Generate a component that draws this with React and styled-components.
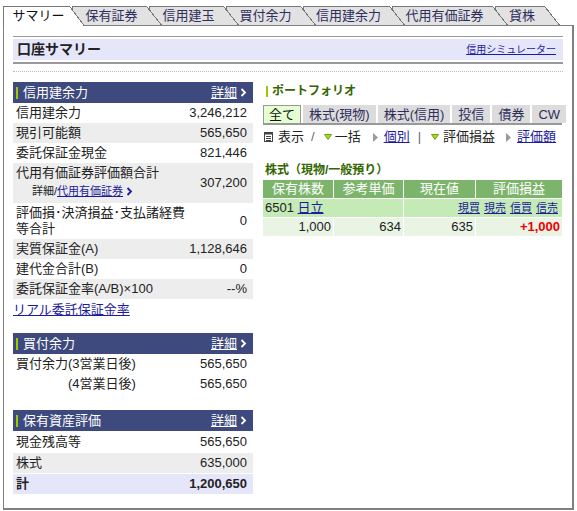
import React from 'react';
import styled, { createGlobalStyle } from 'styled-components';

const GlobalStyle = createGlobalStyle`
  body {
    margin: 0;
    background: #fff;
    font-family: "Liberation Sans", "Noto Sans CJK JP", sans-serif;
    font-size: 13px;
    color: #222;
  }
  a { color: #1c1c9c; text-decoration: underline; }
`;

const Page = styled.div`
  width: 571px;
  margin: 6px 0 0 3px;
`;

const TabBar = styled.div`
  display: flex;
  align-items: flex-start;
  height: 20px;
  margin-bottom: -1px;
  position: relative;
  z-index: 2;
`;

const Tab = styled.div`
  position: relative;
  z-index: ${p => p.$z};
  box-sizing: border-box;
  flex: none;
  width: ${p => p.$w}px;
  height: ${p => (p.$active ? 20 : 19)}px;
  margin-right: 2px;
  padding-left: 3px;
  border-top: 1px solid #777;
  border-left: 1px solid #777;
  background: ${p => (p.$active ? '#fff' : '#e2e2e2')};
  color: ${p => (p.$active ? '#111' : '#2e2e5c')};
  font-size: 13px;
  line-height: 18px;
  text-align: center;
  white-space: nowrap;
  &::after {
    content: '';
    position: absolute;
    top: -1px;
    left: 100%;
    width: 15px;
    height: calc(100% + 1px);
    background: linear-gradient(
      to top right,
      ${p => (p.$active ? '#fff' : '#e2e2e2')} calc(50% - 1px),
      #777 calc(50% - 1px) 50%,
      transparent 50%
    );
  }
`;

const Frame = styled.div`
  position: relative;
  z-index: 1;
  border: 1px solid #808080;
  border-right-width: 2px;
  border-bottom-width: 2px;
  padding: 10px 9px 14px;
`;

const TitleBlock = styled.div`
  border-top: 1px solid #999;
  border-bottom: 2px solid #999;
  padding: 2px 0;
`;

const TitleBar = styled.div`
  display: flex;
  justify-content: space-between;
  align-items: center;
  height: 21px;
  background: #e6e6fa;
  padding: 0 7px 0 4px;
`;

const PageTitle = styled.h1`
  margin: 0;
  font-size: 14px;
  font-weight: bold;
  color: #222;
  line-height: 21px;
`;

const SmallLink = styled.a`
  font-size: 10px;
  line-height: 12px;
`;

const Divider = styled.div`
  margin-top: 7px;
  border-top: 1px dotted #bbb;
`;

const Columns = styled.div`
  display: grid;
  grid-template-columns: 240px 299px;
  column-gap: 10px;
  margin-top: 10px;
  align-items: start;
`;

const Column = styled.div`
  display: flex;
  flex-direction: column;
`;

const SectionHeader = styled.div`
  display: flex;
  align-items: center;
  justify-content: space-between;
  height: 21px;
  margin-top: ${p => p.$mt || 0}px;
  padding: 0 6px 0 3px;
  background: #3e4a7e;
  color: #fff;
  line-height: 16px;
`;

const HeaderTitle = styled.div`
  display: flex;
  align-items: center;
`;

const GreenMark = styled.span`
  display: inline-block;
  width: 2px;
  height: ${p => p.$h || 12}px;
  background: #99cc00;
  margin-right: ${p => p.$mr || 5}px;
  margin-left: ${p => p.$ml || 0}px;
`;

const DetailLink = styled.a`
  display: flex;
  align-items: center;
  gap: 3px;
  color: #fff;
  & > span { text-decoration: underline; }
  text-decoration: none;
`;

const Rows = styled.div`
  display: grid;
  row-gap: ${p => p.$gap || 0}px;
  margin-top: ${p => p.$gap || 0}px;
`;

const shades = { gray: '#ededed', lavender: '#e6e6fa' };

const Row = styled.div`
  display: flex;
  justify-content: space-between;
  align-items: center;
  padding: 2px 6px 2px 3px;
  line-height: 16px;
  background: ${p => shades[p.$shade] || '#fff'};
  font-weight: ${p => (p.$bold ? 'bold' : 'normal')};
`;

const Label = styled.div`
  padding-left: ${p => p.$indent || 0}px;
`;

const Value = styled.div`
  white-space: nowrap;
`;

const SubLine = styled.div`
  font-size: 11px;
  line-height: 20px;
  padding-left: 16px;
  display: flex;
  align-items: center;
  & a { margin-right: 3px; }
`;

const BlockLink = styled.a`
  display: block;
  margin-top: 3px;
  line-height: 16px;
  align-self: flex-start;
`;

const GreenHeading = styled.div`
  display: flex;
  align-items: center;
  margin-top: ${p => p.$mt || 0}px;
  line-height: 16px;
  font-size: 12px;
  font-weight: bold;
  color: #336600;
`;

const FilterTabs = styled.div`
  display: flex;
  gap: 2px;
  margin-top: 6px;
  border-bottom: 2px solid #999;
`;

const FilterTab = styled.div`
  flex: 1 1 auto;
  box-sizing: border-box;
  height: 18px;
  padding: 0 5px;
  line-height: 17px;
  text-align: center;
  white-space: nowrap;
  background: ${p => (p.$active ? '#e4ffd2' : '#dcdcdc')};
  color: ${p => (p.$active ? '#111' : '#2e2e5c')};
  border: ${p => (p.$active ? '1px solid #999' : '1px solid transparent')};
  border-bottom: none;
`;

const ViewRow = styled.div`
  display: flex;
  align-items: center;
  margin-top: 4px;
  line-height: 16px;
  white-space: nowrap;
`;

const Sep = styled.span`
  color: #666;
  margin: 0 ${p => p.$mr}px 0 ${p => p.$ml}px;
`;

const Icon = styled.svg`
  flex: none;
  margin: 0 ${p => p.$mr || 0}px 0 ${p => p.$ml || 0}px;
`;

const StockGrid = styled.div`
  display: grid;
  grid-template-columns: 70px 69px 71px 86px;
  gap: 1px;
  margin-top: 2px;
`;

const cellBg = { head: '#7db46c', name: '#c4eab5', data: '#eaf4e5' };

const Cell = styled.div`
  grid-column: span ${p => p.$span || 1};
  display: flex;
  align-items: center;
  justify-content: ${p => p.$justify || 'flex-start'};
  gap: ${p => p.$gap || 0}px;
  height: 18px;
  padding: 0 ${p => p.$pr ?? 2}px 0 2px;
  line-height: 18px;
  white-space: nowrap;
  background: ${p => cellBg[p.$kind]};
  color: ${p => (p.$kind === 'head' ? '#fff' : '#222')};
  font-size: ${p => p.$size || 13}px;
`;

const Gain = styled.span`
  color: #ee0000;
  font-weight: bold;
`;

const Chevron = ({ color }) => (
  <svg width="7" height="9" viewBox="0 0 7 9">
    <polyline points="1.5,1 5,4.5 1.5,8" fill="none" stroke={color} strokeWidth="1.8" />
  </svg>
);

const ListIcon = () => (
  <Icon width="9" height="10" viewBox="0 0 9 10" $ml={1} $mr={5}>
    <rect x="0.5" y="0.5" width="8" height="9" fill="#fff" stroke="#444" />
    <rect x="0.5" y="0.5" width="8" height="2" fill="#444" />
    <line x1="2" y1="4.5" x2="7" y2="4.5" stroke="#444" />
    <line x1="2" y1="6.5" x2="7" y2="6.5" stroke="#444" />
    <line x1="2" y1="8.5" x2="7" y2="8.5" stroke="#444" />
  </Icon>
);

const DownTri = ({ ml, mr }) => (
  <Icon width="8" height="6" viewBox="0 0 8 6" $ml={ml} $mr={mr}>
    <polygon points="0.5,0.5 7.5,0.5 4,5.5" fill="#a8dc10" stroke="#5e8a00" strokeWidth="0.8" />
  </Icon>
);

const RightTri = ({ ml, mr }) => (
  <Icon width="5" height="9" viewBox="0 0 5 9" $ml={ml} $mr={mr}>
    <polygon points="0,0 5,4.5 0,9" fill="#9a9a9a" />
  </Icon>
);

const tabs = [
  { label: 'サマリー', w: 67, active: true },
  { label: '保有証券', w: 75 },
  { label: '信用建玉', w: 75 },
  { label: '買付余力', w: 75 },
  { label: '信用建余力', w: 87 },
  { label: '代用有価証券', w: 101 },
  { label: '貸株', w: 50 },
];

const filters = ['全て', '株式(現物)', '株式(信用)', '投信', '債券', 'CW'];

const Header = ({ title, mt }) => (
  <SectionHeader $mt={mt}>
    <HeaderTitle>
      <GreenMark />
      {title}
    </HeaderTitle>
    <DetailLink href="#">
      <span>詳細</span>
      <Chevron color="#fff" />
    </DetailLink>
  </SectionHeader>
);

export default function App() {
  return (
    <>
      <GlobalStyle />
      <Page>
        <TabBar>
          {tabs.map((t, i) => (
            <Tab key={t.label} $w={t.w} $active={t.active} $z={t.active ? 20 : 10 - i}>
              {t.label}
            </Tab>
          ))}
        </TabBar>
        <Frame>
          <TitleBlock>
            <TitleBar>
              <PageTitle>口座サマリー</PageTitle>
              <SmallLink href="#">信用シミュレーター</SmallLink>
            </TitleBar>
          </TitleBlock>
          <Divider />
          <Columns>
            <Column>
              <Header title="信用建余力" />
              <Rows>
                <Row>
                  <Label>信用建余力</Label>
                  <Value>3,246,212</Value>
                </Row>
                <Row $shade="gray">
                  <Label>現引可能額</Label>
                  <Value>565,650</Value>
                </Row>
                <Row>
                  <Label>委託保証金現金</Label>
                  <Value>821,446</Value>
                </Row>
                <Row $shade="gray">
                  <Label>
                    代用有価証券評価額合計
                    <SubLine>
                      詳細/<a href="#">代用有価証券</a>
                      <Chevron color="#1c1c9c" />
                    </SubLine>
                  </Label>
                  <Value>307,200</Value>
                </Row>
                <Row>
                  <Label>
                    評価損･決済損益･支払諸経費
                    <br />
                    等合計
                  </Label>
                  <Value>0</Value>
                </Row>
                <Row $shade="gray">
                  <Label>実質保証金(A)</Label>
                  <Value>1,128,646</Value>
                </Row>
                <Row>
                  <Label>建代金合計(B)</Label>
                  <Value>0</Value>
                </Row>
                <Row $shade="gray">
                  <Label>委託保証金率(A/B)×100</Label>
                  <Value>--%</Value>
                </Row>
              </Rows>
              <BlockLink href="#">リアル委託保証金率</BlockLink>

              <Header title="買付余力" mt={15} />
              <Rows>
                <Row>
                  <Label>買付余力(3営業日後)</Label>
                  <Value>565,650</Value>
                </Row>
                <Row>
                  <Label $indent={52}>(4営業日後)</Label>
                  <Value>565,650</Value>
                </Row>
              </Rows>

              <Header title="保有資産評価" mt={16} />
              <Rows $gap={1}>
                <Row>
                  <Label>現金残高等</Label>
                  <Value>565,650</Value>
                </Row>
                <Row $shade="gray">
                  <Label>株式</Label>
                  <Value>635,000</Value>
                </Row>
                <Row $shade="lavender" $bold>
                  <Label>計</Label>
                  <Value>1,200,650</Value>
                </Row>
              </Rows>
            </Column>

            <Column>
              <GreenHeading $mt={1}>
                <GreenMark $h={11} $ml={3} $mr={4} />
                ポートフォリオ
              </GreenHeading>
              <FilterTabs>
                {filters.map((f, i) => (
                  <FilterTab key={f} $active={i === 0}>
                    {f}
                  </FilterTab>
                ))}
              </FilterTabs>
              <ViewRow>
                <ListIcon />
                <span>表示</span>
                <Sep $ml={7} $mr={7}>/</Sep>
                <DownTri ml={2} mr={3} />
                <span>一括</span>
                <RightTri ml={12} mr={6} />
                <a href="#">個別</a>
                <Sep $ml={8} $mr={10}>|</Sep>
                <DownTri mr={4} />
                <span>評価損益</span>
                <RightTri ml={11} mr={6} />
                <a href="#">評価額</a>
              </ViewRow>

              <GreenHeading $mt={17}>
                <span style={{ paddingLeft: 2 }}>株式（現物/一般預り）</span>
              </GreenHeading>
              <StockGrid>
                <Cell $kind="head" $justify="center">保有株数</Cell>
                <Cell $kind="head" $justify="center">参考単価</Cell>
                <Cell $kind="head" $justify="center">現在値</Cell>
                <Cell $kind="head" $justify="center">評価損益</Cell>

                <Cell $kind="name" $span={2}>
                  6501&nbsp;<a href="#">日立</a>
                </Cell>
                <Cell $kind="name" $span={2} $justify="flex-end" $gap={4} $pr={4} $size={11}>
                  <a href="#">現買</a>
                  <a href="#">現売</a>
                  <a href="#">信買</a>
                  <a href="#">信売</a>
                </Cell>

                <Cell $kind="data" $justify="flex-end">1,000</Cell>
                <Cell $kind="data" $justify="flex-end">634</Cell>
                <Cell $kind="data" $justify="flex-end">635</Cell>
                <Cell $kind="data" $justify="flex-end">
                  <Gain>+1,000</Gain>
                </Cell>
              </StockGrid>
            </Column>
          </Columns>
        </Frame>
      </Page>
    </>
  );
}
